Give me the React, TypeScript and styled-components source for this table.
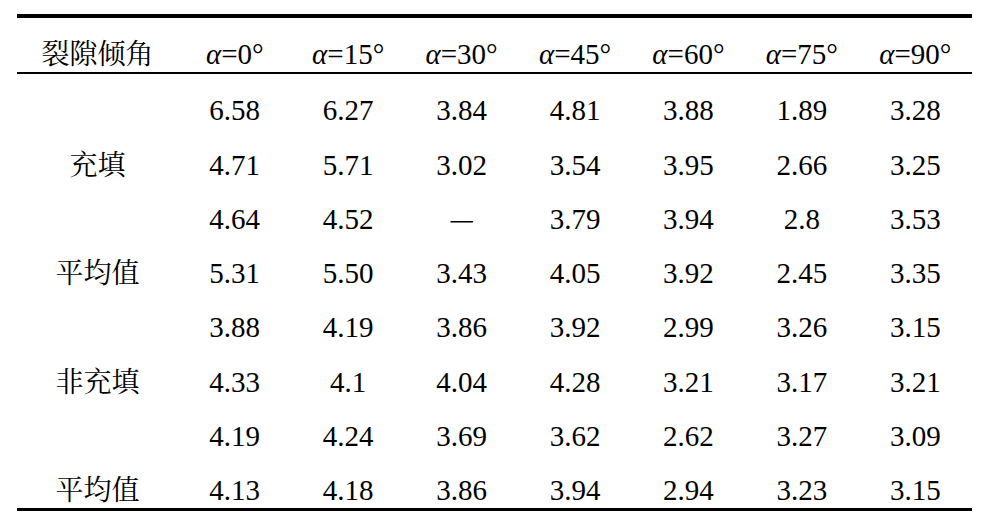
import React from 'react';
import styled, { createGlobalStyle } from 'styled-components';

const GlobalStyle = createGlobalStyle`
  html, body {
    margin: 0;
    padding: 0;
    background: #ffffff;
  }
`;

const angles = [0, 15, 30, 45, 60, 75, 90];

const rows: { label: string; values: string[] }[] = [
  { label: '', values: ['6.58', '6.27', '3.84', '4.81', '3.88', '1.89', '3.28'] },
  { label: '充填', values: ['4.71', '5.71', '3.02', '3.54', '3.95', '2.66', '3.25'] },
  { label: '', values: ['4.64', '4.52', '—', '3.79', '3.94', '2.8', '3.53'] },
  { label: '平均值', values: ['5.31', '5.50', '3.43', '4.05', '3.92', '2.45', '3.35'] },
  { label: '', values: ['3.88', '4.19', '3.86', '3.92', '2.99', '3.26', '3.15'] },
  { label: '非充填', values: ['4.33', '4.1', '4.04', '4.28', '3.21', '3.17', '3.21'] },
  { label: '', values: ['4.19', '4.24', '3.69', '3.62', '2.62', '3.27', '3.09'] },
  { label: '平均值', values: ['4.13', '4.18', '3.86', '3.94', '2.94', '3.23', '3.15'] },
];

const App = () => {
  return (
    <Page>
      <GlobalStyle />
      <Table>
        <colgroup>
          <LabelCol />
          {angles.map((a) => (
            <DataCol key={a} />
          ))}
        </colgroup>
        <thead>
          <HeadRow>
            <HeadCell>
              <Han>裂隙倾角</Han>
            </HeadCell>
            {angles.map((a) => (
              <HeadCell key={a}>
                <Alpha>α</Alpha>={a}°
              </HeadCell>
            ))}
          </HeadRow>
        </thead>
        <tbody>
          {rows.map((row, i) => (
            <BodyRow key={i}>
              <Cell>
                <Han>{row.label}</Han>
              </Cell>
              {row.values.map((v, j) => (
                <Cell key={j}>{v === '—' ? <Han>—</Han> : v}</Cell>
              ))}
            </BodyRow>
          ))}
        </tbody>
      </Table>
    </Page>
  );
};

export default App;

const Page = styled.div`
  width: 990px;
  height: 531px;
  padding: 14px 0 0 17px;
  box-sizing: border-box;
  background: #ffffff;
`;

const Table = styled.table`
  width: 955px;
  border-collapse: separate;
  border-spacing: 0;
  table-layout: fixed;
  font-family: 'Liberation Serif', 'Noto Serif CJK SC', serif;
  font-size: 29px;
  color: #000000;
  border-top: 4px solid #000000;
  border-bottom: 3px solid #000000;
`;

const LabelCol = styled.col`
  width: 161px;
`;

const DataCol = styled.col`
  width: 113.4px;
`;

const HeadRow = styled.tr`
  height: 56px;
`;

const BodyRow = styled.tr`
  height: 54.25px;
`;

const HeadCell = styled.th`
  font-family: 'Liberation Serif', 'Noto Serif CJK SC', serif;
  font-size: 29px;
  font-weight: normal;
  text-align: center;
  vertical-align: bottom;
  line-height: 30px;
  padding: 0 0 3px;
  white-space: nowrap;
  border-bottom: 2px solid #000000;
`;

const Cell = styled.td`
  font-family: 'Liberation Serif', 'Noto Serif CJK SC', serif;
  font-size: 29px;
  text-align: center;
  vertical-align: bottom;
  line-height: 30px;
  padding: 0 0 3px;
  white-space: nowrap;
`;

const Alpha = styled.span`
  font-style: italic;
`;

const Han = styled.span`
  font-family: 'Noto Serif CJK SC', serif;
  font-size: 28px;
`;
